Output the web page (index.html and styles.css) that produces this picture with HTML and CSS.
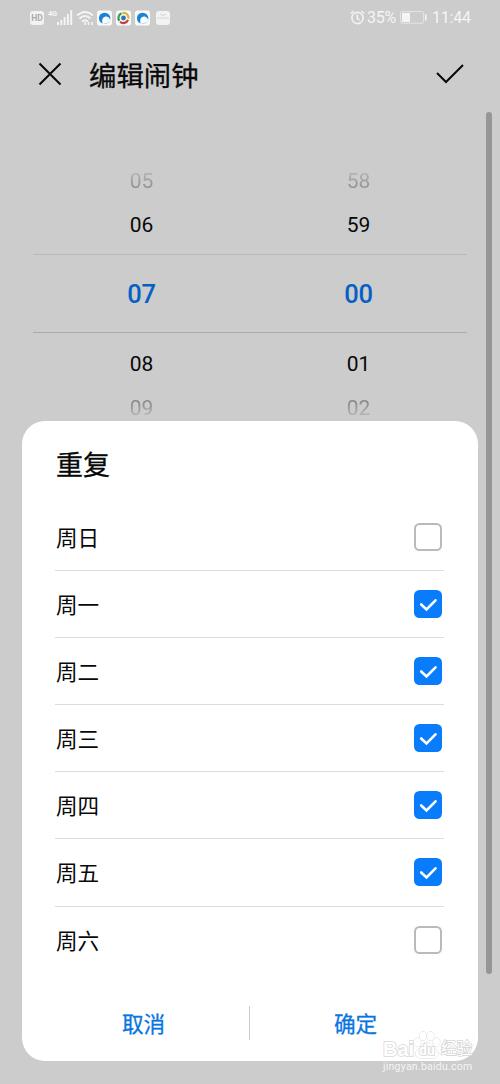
FILE: index.html
```
<!DOCTYPE html>
<html lang="zh-CN">
<head>
<meta charset="utf-8">
<title>编辑闹钟</title>
<link rel="stylesheet" href="styles.css">
</head>
<body>
<div class="screen">
  <div class="status">
    <span class="hd">HD</span>
    <span class="net">4G</span>
    <svg class="signal" width="16" height="15" viewBox="0 0 16 15" fill="#f4f4f4"><path d="M0 12h2v3H0zM3.300 10h2v5h-2zM6.600 7h2v8h-2zM9.900 4h2v11h-2zM13.200 0h2v15h-2z"/></svg>
    <svg class="wifi" width="18" height="16" viewBox="0 0 18 16" fill="none" stroke="#f4f4f4" stroke-width="2"><path d="M1 5.500Q9-1.500 17 5.500M3.500 8.500Q9 3.500 14.500 8.500M6 11.500Q9 9 12 11.500"/><path d="M9 12v3M12.500 12v3M16 12v3" stroke-width="1.600"/></svg>
    <svg class="app" width="15" height="16" viewBox="0 0 16 16"><rect width="16" height="16" rx="3" fill="#fafafa"/><path d="M6 13.800C.5 12 .5 2.500 8 2.300c5 0 7 4.200 6 7.700-.8-2.500-2.500-4-5-3.500-3.500.8-4 4.500-3 7.300" fill="#1b83d6"/><path d="M7 14q4 .5 6.500-2" fill="none" stroke="#b5dcf5"/></svg>
    <svg class="app" width="15" height="16" viewBox="0 0 16 16"><rect width="16" height="16" rx="3" fill="#fafafa"/><g fill="none" stroke-width="2.400"><path d="M3.500 11A5.300 5.300 0 0 1 6 3" stroke="#389b55"/><path d="M7 2.700a5.300 5.300 0 0 1 6.300 6" stroke="#d8b52d"/><path d="M12.800 10a5.300 5.300 0 0 1-8.500 2" stroke="#c83d38"/></g><circle cx="8" cy="8" r="2.600" fill="#2878b8"/></svg>
    <svg class="app" width="15" height="16" viewBox="0 0 16 16"><rect width="16" height="16" rx="3" fill="#fafafa"/><path d="M6 13.800C.5 12 .5 2.500 8 2.300c5 0 7 4.200 6 7.700-.8-2.500-2.500-4-5-3.500-3.500.8-4 4.500-3 7.300" fill="#1b83d6"/><path d="M7 14q4 .5 6.500-2" fill="none" stroke="#b5dcf5"/></svg>
    <svg class="box" width="14" height="14" viewBox="0 0 14 14"><rect width="14" height="14" rx="3" fill="#f3f3f3"/><path d="M4 3q3 3 6 0M1 7h12" fill="none" stroke="#d4d4d4"/></svg>
    <span class="spacer"></span>
    <svg class="alarm" width="15" height="15" viewBox="0 0 15 15" fill="none" stroke="#f2f2f2" stroke-width="1.600"><circle cx="7.500" cy="8" r="5.600"/><path d="M7.300 4.500v4l2.200 1.500M.7 3.500l3-2.500M14.300 3.500l-3-2.500"/></svg>
    <span class="percent">35%</span>
    <svg class="battery" width="27" height="13" viewBox="0 0 27 13"><rect x=".6" y=".6" width="23" height="11.600" rx="1.500" fill="none" stroke="#e6e6e6"/><path d="M2 2h8v9H2zM25 3.500h1.500v6H25z" fill="#f5f5f5"/></svg>
    <span class="clock">11:44</span>
  </div>
  <header class="header">
    <svg width="24" height="24" viewBox="0 0 24 24"><path d="M1.500 1.500l21 21M22.500 1.500l-21 21"/></svg>
    <h1>编辑闹钟</h1>
    <svg width="28" height="20" viewBox="0 0 28 20"><path d="M1 9l9 9L27 1"/></svg>
  </header>
  <main class="picker">
    <div class="row far top"><span>05</span><span>58</span></div>
    <div class="row near"><span>06</span><span>59</span></div>
    <div class="row current"><span>07</span><span>00</span></div>
    <div class="row near lower"><span>08</span><span>01</span></div>
    <div class="row far bottom"><span>09</span><span>02</span></div>
  </main>
  <div class="scrollbar"></div>
  <section class="dialog">
    <h2>重复</h2>
    <ul class="days">
      <li><span>周日</span><i class="check"></i></li>
      <li><span>周一</span><i class="check on"><svg viewBox="0 0 28 28"><path d="M7.200 14.500l5.300 5L21.500 10.300"/></svg></i></li>
      <li><span>周二</span><i class="check on"><svg viewBox="0 0 28 28"><path d="M7.200 14.500l5.300 5L21.500 10.300"/></svg></i></li>
      <li><span>周三</span><i class="check on"><svg viewBox="0 0 28 28"><path d="M7.200 14.500l5.300 5L21.500 10.300"/></svg></i></li>
      <li><span>周四</span><i class="check on"><svg viewBox="0 0 28 28"><path d="M7.200 14.500l5.300 5L21.500 10.300"/></svg></i></li>
      <li><span>周五</span><i class="check on"><svg viewBox="0 0 28 28"><path d="M7.200 14.500l5.300 5L21.500 10.300"/></svg></i></li>
      <li><span>周六</span><i class="check"></i></li>
    </ul>
    <div class="actions"><span class="action">取消</span><span class="sep"></span><span class="action">确定</span></div>
  </section>
  <div class="mark">
    <div class="brand">
      <span class="bai">Bai</span>
      <span class="paw"><svg width="28" height="28" viewBox="0 0 28 30" preserveAspectRatio="none"><ellipse cx="4.500" cy="12" rx="3.400" ry="4.500"/><ellipse cx="10" cy="5.500" rx="3.400" ry="4.700"/><ellipse cx="17.500" cy="5.500" rx="3.400" ry="4.700"/><ellipse cx="23.500" cy="12" rx="3.400" ry="4.500"/><path d="M14 12c5 0 6 5 9 8 5 5 1 9-3 9H8c-5 0-8-5-3-9 4-3 4-8 9-8z"/></svg><b>du</b></span>
      <span class="jy">经验</span>
    </div>
    <div class="url">jingyan.baidu.com</div>
  </div>
</div>
</body>
</html>
```

FILE: styles.css
```
* { box-sizing: border-box; }
body { margin: 0; background: #ccc; font-family: Roboto, "Noto Sans CJK SC", sans-serif; }
.screen { position: relative; width: 500px; height: 1084px; overflow: hidden; background: #ccc; color: #080808; }
svg { display: block; flex: none; }

.status { display: flex; align-items: center; height: 35px; padding: 0 30px; color: #f5f5f5; line-height: 1; }
.hd { width: 14px; height: 14px; border-radius: 3px; background: #f3f3f3; color: #aaa; font-size: 8.5px; font-weight: 700; line-height: 14px; text-align: center; }
.net { width: 9px; margin: 0 0 8px 4px; font-size: 7.5px; font-weight: 700; letter-spacing: -.3px; }
.wifi { margin-left: 3px; }
.app { margin-left: 4px; }
.wifi + .app { margin-left: 3px; }
.box { margin-left: 6px; }
.spacer { flex: 1; }
.percent { width: 34px; margin-left: 2px; font-size: 16px; letter-spacing: -.2px; }
.battery { margin: 0 5px 0 -1px; }
.clock { width: 38px; font-size: 16px; letter-spacing: -.2px; white-space: nowrap; }

.header { display: flex; align-items: center; height: 77px; padding: 0 36px 0 38px; }
.header svg { fill: none; stroke: #080808; stroke-width: 2; }
h1, h2 { margin: 0; font-weight: 400; -webkit-text-stroke: .3px currentColor; }
h1 { flex: 1; margin-left: 27px; padding-top: 7px; font-size: 27.4px; line-height: 40px; }

.picker { margin: 47px 33px 0; font-size: 21px; }
.row { display: grid; grid-template-columns: 217px 217px; height: 44px; line-height: 44px; text-align: center; }
.near { height: 51px; }
.near.lower { height: 54px; padding-top: 9px; }
.current { height: 79px; line-height: 79px; border-top: 1px solid #b8b8b8; border-bottom: 1px solid #aaa; color: #0560c5; font-size: 25.5px; font-weight: 500; letter-spacing: -.3px; }
.far span { color: transparent; background-clip: text; -webkit-background-clip: text; }
.top span { background-image: linear-gradient(#bbb 25%, #858585 75%); }
.bottom { margin-top: -1px; }
.bottom span { background-image: linear-gradient(#808080 30%, #c0c0c0 75%); }

.scrollbar { position: absolute; left: 486px; top: 112px; width: 6px; height: 862px; border-radius: 3px; background: #969696; }

.dialog { position: absolute; left: 22px; top: 421px; width: 456px; height: 640px; padding: 25px 34px 0 33px; border-radius: 23px; background: #fff; }
h2 { height: 58px; padding-left: 1px; font-size: 27px; line-height: 40px; }
.days { margin: 0; padding: 0; list-style: none; }
.days li { display: flex; align-items: center; justify-content: space-between; height: 67.1px; padding: 0 2px 0 1px; border-bottom: 1px solid #dcdcdc; font-size: 21.6px; }
.days li:last-child { border-bottom: 0; }
.days span { padding-bottom: 2px; }
.check { width: 28px; height: 28px; margin-bottom: 1px; border: 2px solid #bababa; border-radius: 5.5px; }
.check.on { border: 0; background: #087cfb; }
.check path { fill: none; stroke: #fff; stroke-width: 2.6; stroke-linecap: round; }
.actions { display: flex; align-items: center; height: 34px; margin-top: 32px; color: #0875e1; font-size: 21.6px; -webkit-text-stroke: .3px currentColor; }
.action { flex: 1; text-align: center; }
.action:first-child { padding-right: 17px; }
.action:last-child { padding-left: 17px; }
.sep { width: 1px; height: 34px; background: #ccc; }

.mark { position: absolute; left: 383px; top: 1029px; width: 94px; color: #fff; }
.brand { display: flex; align-items: flex-end; height: 30px; line-height: 20px; -webkit-text-stroke: 1.6px #d8d8d8; paint-order: stroke fill; }
.bai { width: 30px; font-family: "Liberation Sans", sans-serif; font-size: 20px; font-weight: 700; }
.paw { position: relative; width: 28px; }
.paw path, .paw ellipse { fill: #fff; stroke: #dadada; stroke-width: 1; }
.paw b { position: absolute; left: 6px; bottom: 2px; font-size: 14px; line-height: 14px; }
.jy { font-size: 15.5px; white-space: nowrap; }
.url { color: #f5f5f5; font-size: 10.5px; line-height: 15px; letter-spacing: .25px; white-space: nowrap; }
```
